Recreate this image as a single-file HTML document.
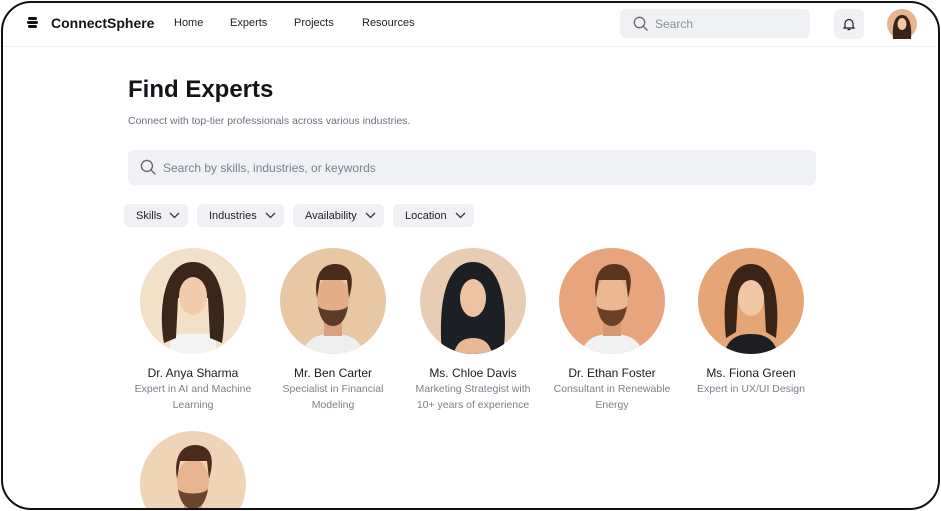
<!DOCTYPE html>
<html><head><style>
*{box-sizing:border-box;margin:0;padding:0}
html,body{width:941px;height:511px;overflow:hidden}
body{background:#fff;font-family:"Liberation Sans",sans-serif;position:relative}
.frame{position:absolute;left:1px;top:1px;width:939px;height:509px;border:2px solid #111;border-radius:30px;overflow:hidden;background:#fff}
.nav{position:absolute;left:0;top:0;width:100%;height:44px;border-bottom:1px solid #f0f1f3}
.logo{position:absolute;left:48px;top:12px;font-size:14px;font-weight:bold;color:#121418}
.nl{position:absolute;top:14px;font-size:11px;color:#222}
.srch{position:absolute;left:617px;top:6px;width:190px;height:29px;background:#f0f1f5;border-radius:6px}
.srch span{position:absolute;left:35px;top:8px;font-size:12px;color:#8a8f99}
.bell{position:absolute;left:831px;top:6px;width:30px;height:30px;background:#f0f1f5;border-radius:6px}
h1{position:absolute;left:125px;top:73px;font-size:24px;font-weight:bold;color:#121418}
.sub{position:absolute;left:125px;top:112px;font-size:10.5px;color:#6b7280}
.big{position:absolute;left:125px;top:147px;width:688px;height:35px;background:#f0f1f5;border-radius:6px}
.big span{position:absolute;left:35px;top:11px;font-size:12px;color:#7b8090}
.chip{position:absolute;top:201px;height:23px;background:#f0f1f5;border-radius:5px;font-size:11px;color:#222;padding:6px 0 0 12px}
.chip svg{position:absolute;right:8px;top:8px}
.card{position:absolute;top:245px;width:140px;text-align:center}
.av{width:106px;height:106px;border-radius:50%;margin:0 auto;overflow:hidden}
.nm{font-size:12px;color:#1a1c20;margin-top:12px}
.ds{font-size:10.5px;color:#7a808c;line-height:16px;margin-top:1px}
</style></head><body>
<div class="frame">
<div class="nav">
<svg style="position:absolute;left:24px;top:14px" width="11" height="11" viewBox="0 0 11 11"><rect x="1" y="0" width="9" height="3" rx="1.5" fill="#111"/><rect x="0" y="4" width="11" height="3" rx="1.5" fill="#111"/><rect x="1" y="8" width="9" height="3" rx="1.5" fill="#111"/></svg>
<div class="logo">ConnectSphere</div>
<div class="nl" style="left:171px">Home</div>
<div class="nl" style="left:227px">Experts</div>
<div class="nl" style="left:291px">Projects</div>
<div class="nl" style="left:359px">Resources</div>
<div class="srch"><svg style="position:absolute;left:13px;top:7px" width="16" height="16" viewBox="0 0 16 16"><circle cx="6.5" cy="6.5" r="5.2" fill="none" stroke="#666" stroke-width="1.3"/><path d="M10.3 10.3L14.5 14.5" stroke="#666" stroke-width="1.3"/></svg><span>Search</span></div>
<div class="bell"><svg style="position:absolute;left:8px;top:8px" width="14" height="14" viewBox="0 0 14 14"><path d="M3 10V6.5a4 4 0 0 1 8 0V10l1 1H2z" fill="none" stroke="#222" stroke-width="1.2"/><path d="M5.5 12.5h3" stroke="#222" stroke-width="1.2"/></svg></div>
<svg style="position:absolute;left:884px;top:6px" width="30" height="30" viewBox="0 0 30 30"><circle cx="15" cy="15" r="15" fill="#e8b48f"/><path d="M6 30C5 18 7 6 15 6s10 12 9 24z" fill="#3a2418"/><ellipse cx="15" cy="15" rx="4.5" ry="6" fill="#f1c9a8"/></svg>
</div>
<h1>Find Experts</h1>
<div class="sub">Connect with top-tier professionals across various industries.</div>
<div class="big"><svg style="position:absolute;left:12px;top:9px" width="17" height="17" viewBox="0 0 16 16"><circle cx="6.5" cy="6.5" r="5.2" fill="none" stroke="#666" stroke-width="1.3"/><path d="M10.3 10.3L14.5 14.5" stroke="#666" stroke-width="1.3"/></svg><span>Search by skills, industries, or keywords</span></div>
<div class="chip" style="left:121px;width:64px">Skills<svg width="11" height="7" viewBox="0 0 11 7"><path d="M1 1l4.5 4.5L10 1" fill="none" stroke="#333" stroke-width="1.3"/></svg></div>
<div class="chip" style="left:194px;width:87px">Industries<svg width="11" height="7" viewBox="0 0 11 7"><path d="M1 1l4.5 4.5L10 1" fill="none" stroke="#333" stroke-width="1.3"/></svg></div>
<div class="chip" style="left:290px;width:91px">Availability<svg width="11" height="7" viewBox="0 0 11 7"><path d="M1 1l4.5 4.5L10 1" fill="none" stroke="#333" stroke-width="1.3"/></svg></div>
<div class="chip" style="left:390px;width:81px">Location<svg width="11" height="7" viewBox="0 0 11 7"><path d="M1 1l4.5 4.5L10 1" fill="none" stroke="#333" stroke-width="1.3"/></svg></div>

<div class="card" style="left:120px"><div class="av"><svg width="106" height="106" viewBox="0 0 106 106"><rect width="106" height="106" fill="#f3e0c8"/><path d="M30 106h46v-20H30z" fill="#f4f4f4"/><path d="M24 95C18 60 24 14 53 14s35 46 29 81L70 90 68 50H38l-2 40z" fill="#3b2719"/><ellipse cx="53" cy="48" rx="14" ry="19" fill="#f0cbac"/></svg></div><div class="nm">Dr. Anya Sharma</div><div class="ds">Expert in AI and Machine<br>Learning</div></div>
<div class="card" style="left:260px"><div class="av"><svg width="106" height="106" viewBox="0 0 106 106"><rect width="106" height="106" fill="#e8c8a4"/><path d="M22 106c4-16 16-20 31-20s27 4 31 20z" fill="#efefef"/><rect x="44" y="68" width="18" height="20" fill="#d9a27e"/><ellipse cx="53" cy="50" rx="16" ry="22" fill="#e2ad88"/><path d="M37 50c-4-24 6-34 18-34s22 8 14 34l-2-18H40z" fill="#4a2c1d"/><path d="M38 58c2 14 8 20 15 20s13-6 15-20c-4 6-26 6-30 0z" fill="#5a3a28"/></svg></div><div class="nm">Mr. Ben Carter</div><div class="ds">Specialist in Financial<br>Modeling</div></div>
<div class="card" style="left:400px"><div class="av"><svg width="106" height="106" viewBox="0 0 106 106"><rect width="106" height="106" fill="#e9cdb3"/><path d="M22 106C18 60 24 14 53 14s36 46 30 92z" fill="#1c1f24"/><path d="M34 106c2-12 10-16 19-16s17 4 19 16z" fill="#e8b896"/><ellipse cx="53" cy="50" rx="13" ry="19" fill="#eec3a2"/></svg></div><div class="nm">Ms. Chloe Davis</div><div class="ds">Marketing Strategist with<br>10+ years of experience</div></div>
<div class="card" style="left:539px"><div class="av"><svg width="106" height="106" viewBox="0 0 106 106"><rect width="106" height="106" fill="#e8a47c"/><path d="M22 106c4-16 16-20 31-20s27 4 31 20z" fill="#f2f2f2"/><rect x="44" y="68" width="18" height="20" fill="#d49a74"/><ellipse cx="53" cy="50" rx="16" ry="22" fill="#eab792"/><path d="M37 50c-4-24 6-34 18-34s22 8 14 34l-2-18H40z" fill="#5a3622"/><path d="M38 58c2 14 8 20 15 20s13-6 15-20c-4 6-26 6-30 0z" fill="#6a4028"/></svg></div><div class="nm">Dr. Ethan Foster</div><div class="ds">Consultant in Renewable<br>Energy</div></div>
<div class="card" style="left:678px"><div class="av"><svg width="106" height="106" viewBox="0 0 106 106"><rect width="106" height="106" fill="#e6a577"/><path d="M26 106c4-16 14-20 27-20s23 4 27 20z" fill="#1c1e22"/><path d="M28 90C24 56 28 16 53 16s29 40 25 74L68 84 66 48H40l-2 36z" fill="#3a2418"/><ellipse cx="53" cy="50" rx="13" ry="18" fill="#f0c6a4"/></svg></div><div class="nm">Ms. Fiona Green</div><div class="ds">Expert in UX/UI Design</div></div>
<div style="position:absolute;left:137px;top:428px;width:106px;height:79px;overflow:hidden"><div class="av"><svg width="106" height="106" viewBox="0 0 106 106"><rect width="106" height="106" fill="#f0d4b8"/><rect x="44" y="68" width="18" height="30" fill="#d9a27e"/><ellipse cx="53" cy="50" rx="16" ry="22" fill="#e6b590"/><path d="M37 48c-4-24 6-34 18-34s22 8 14 34l-2-18H40z" fill="#4a2c1d"/><path d="M38 58c2 14 8 20 15 20s13-6 15-20c-4 6-26 6-30 0z" fill="#6a4530"/></svg></div></div>
</div>
</body></html>
